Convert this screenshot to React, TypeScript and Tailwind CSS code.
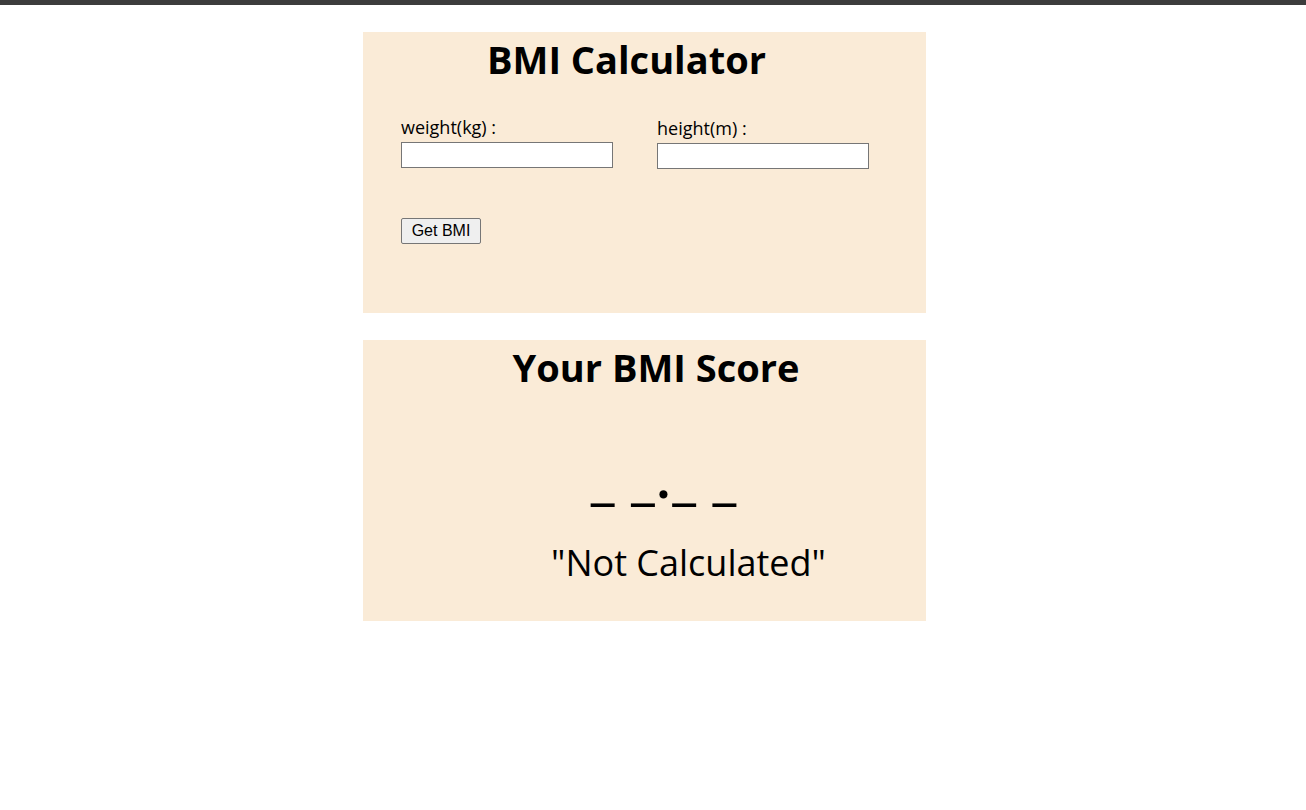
import React from "react";

const font = { fontFamily: '"Open Sans", "Noto Sans", sans-serif' };

const App: React.FC = () => {
  return (
    <div className="min-h-[810px] bg-white text-black" style={font}>
      <div className="h-[5px] bg-[#3c3c3c]" />

      {/* calculator card */}
      <div className="ml-[363px] mt-[27px] flex h-[281px] w-[563px] flex-col bg-[#faebd7] px-[38px]">
        <h1 className="mt-[1px] pr-[36px] text-center text-[38px] font-bold leading-[52px]">
          BMI Calculator
        </h1>
        <div className="mt-[30px] flex gap-[44px]">
          <div className="flex flex-col">
            <label className="text-[18px] leading-[24px]">weight(kg) :</label>
            <input className="mt-[3px] h-[26px] w-[212px] border border-[#767676] bg-white" />
          </div>
          <div className="flex flex-col pt-[1px]">
            <label className="text-[18px] leading-[24px]">height(m) :</label>
            <input className="mt-[3px] h-[26px] w-[212px] border border-[#767676] bg-white" />
          </div>
        </div>
        <div className="mt-[49px]">
          <button
            className="h-[26px] w-[80px] rounded-[2px] border border-[#767676] bg-[#efefef] text-[16px]"
            style={{ fontFamily: '"Liberation Sans", Arial, sans-serif' }}
          >
            Get BMI
          </button>
        </div>
      </div>

      {/* result card */}
      <div className="ml-[363px] mt-[27px] flex h-[281px] w-[563px] flex-col items-center bg-[#faebd7]">
        <h2 className="mt-[1px] pl-[23px] text-center text-[38px] font-bold leading-[52px]">
          Your BMI Score
        </h2>
        <div className="mt-[53px] pl-[39px] text-[56px] font-semibold leading-[60px] tracking-[1px]">
          _ _._ _
        </div>
        <div className="mt-[32px] pl-[88px] text-[36px] leading-[50px]">"Not Calculated"</div>
      </div>
    </div>
  );
};

export default App;
